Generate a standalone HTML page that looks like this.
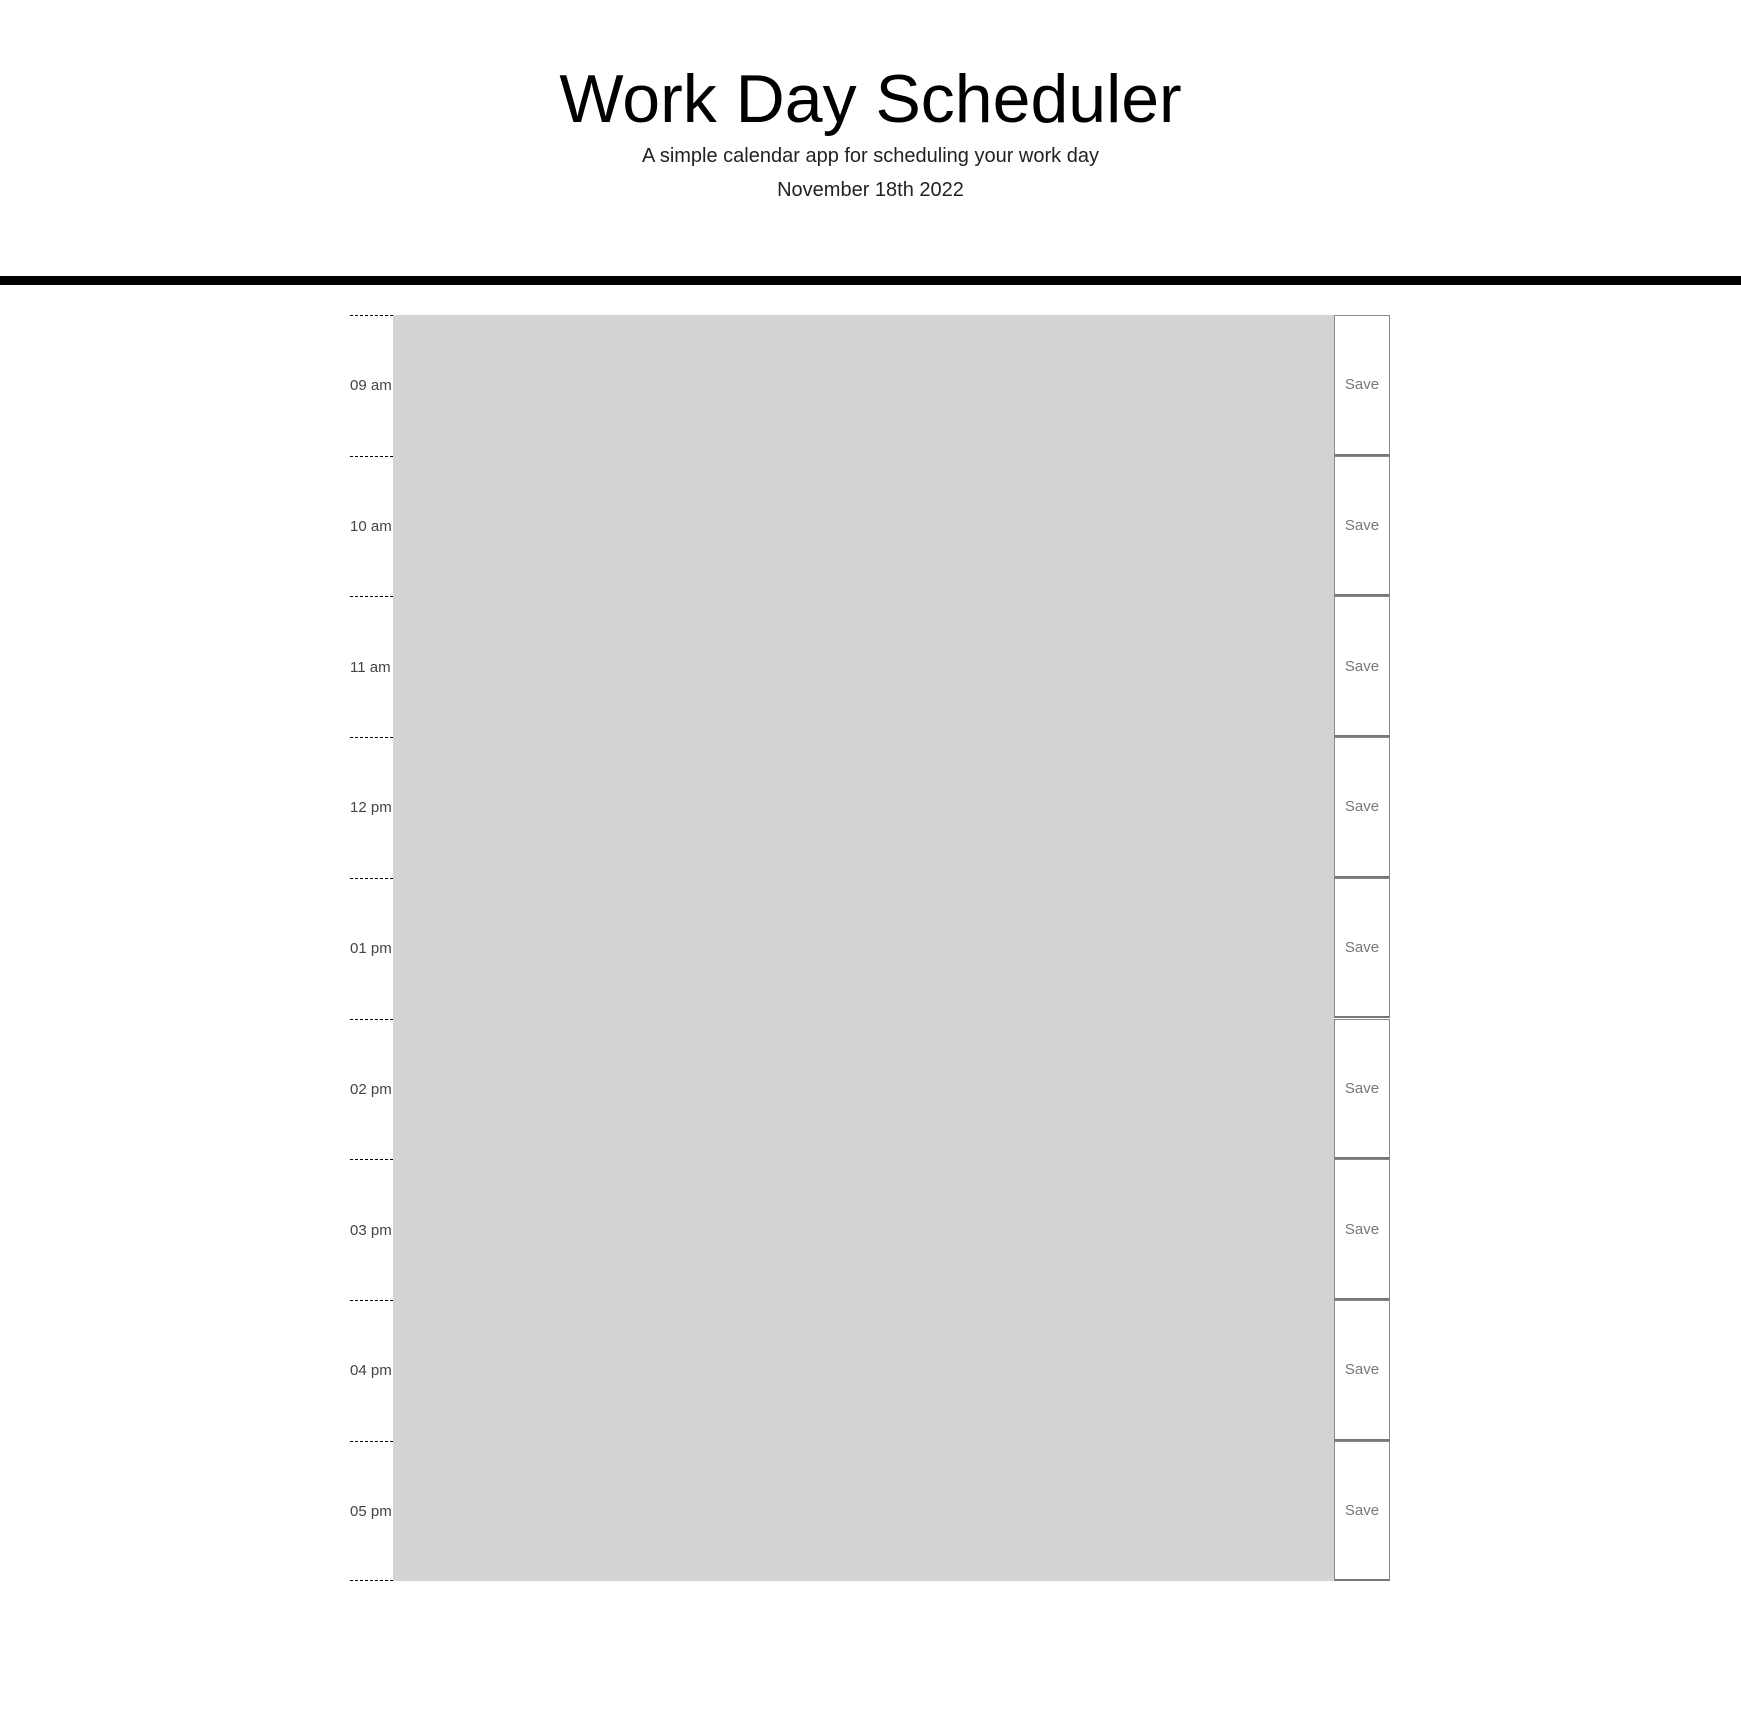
<!DOCTYPE html>
<html><head><meta charset="utf-8"><style>
html,body{margin:0;padding:0;background:#fff;width:1741px;height:1716px;overflow:hidden;font-family:"Liberation Sans",sans-serif;}
h1{position:absolute;left:0;width:1741px;top:59px;margin:0;text-align:center;font-weight:400;font-size:68px;line-height:80px;color:#000;}
.sub{position:absolute;left:0;width:1741px;top:144px;text-align:center;font-size:20px;line-height:24px;color:#222;}
.date{position:absolute;left:0;width:1741px;top:178px;text-align:center;font-size:20px;line-height:24px;color:#222;}
.bar{position:absolute;left:0;top:276px;width:1741px;height:9px;background:#000;}
.bg{position:absolute;left:393px;top:315px;width:941px;height:1266px;background:#d3d3d3;}
.row{position:absolute;left:350px;width:1040px;height:140.7px;}
.time{position:absolute;left:0;top:0;width:43px;height:100%;border-top:1.5px dashed #000;box-sizing:border-box;font-size:15px;color:#444;display:flex;align-items:center;}
.save{position:absolute;left:984px;top:0;width:56px;height:100%;box-sizing:border-box;border:1px solid #888;border-bottom:2px solid #777;background:#fff;display:flex;align-items:center;justify-content:center;font-size:15px;color:#777;}
.endline{position:absolute;left:350px;top:1580px;width:43px;border-top:1.5px dashed #000;}
</style></head><body>
<h1>Work Day Scheduler</h1>
<div class="sub">A simple calendar app for scheduling your work day</div>
<div class="date">November 18th 2022</div>
<div class="bar"></div>
<div class="bg"></div>
<div class="row" style="top:315px"><div class="time">09 am</div><div class="save">Save</div></div>
<div class="row" style="top:455.7px"><div class="time">10 am</div><div class="save">Save</div></div>
<div class="row" style="top:596.4px"><div class="time">11 am</div><div class="save">Save</div></div>
<div class="row" style="top:737.1px"><div class="time">12 pm</div><div class="save">Save</div></div>
<div class="row" style="top:877.8px"><div class="time">01 pm</div><div class="save">Save</div></div>
<div class="row" style="top:1018.5px"><div class="time">02 pm</div><div class="save">Save</div></div>
<div class="row" style="top:1159.2px"><div class="time">03 pm</div><div class="save">Save</div></div>
<div class="row" style="top:1299.9px"><div class="time">04 pm</div><div class="save">Save</div></div>
<div class="row" style="top:1440.6px"><div class="time">05 pm</div><div class="save">Save</div></div>
<div class="endline"></div>
</body></html>
